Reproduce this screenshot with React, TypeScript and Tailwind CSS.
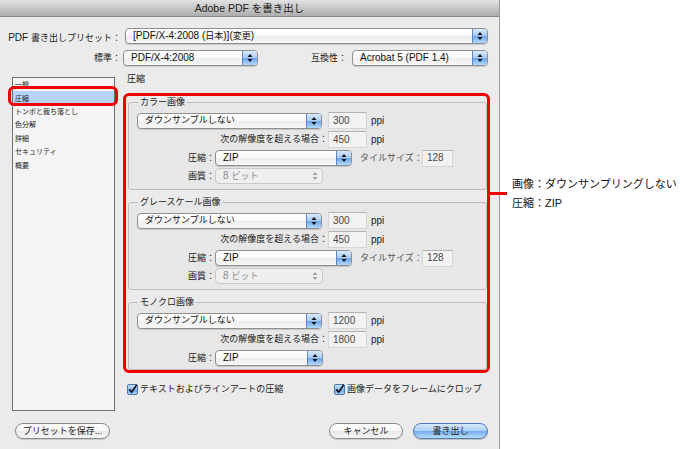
import React from "react";

function Arrows({ disabled }: { disabled?: boolean }) {
  const c = disabled ? "#a0a0a0" : "#111111";
  return (
    <svg width="6" height="10" viewBox="0 0 6 10">
      <path d="M0.5 4 L3 1 L5.5 4 Z" fill={c} />
      <path d="M0.5 6 L3 9 L5.5 6 Z" fill={c} />
    </svg>
  );
}

function Popup({ w, children, disabled }: { w: string; children: React.ReactNode; disabled?: boolean }) {
  return (
    <div
      className={`${w} h-[16px] shrink-0 flex rounded-[4px] border overflow-hidden ${
        disabled
          ? "border-[#c9c9c9] bg-[#efefef]"
          : "border-[#8f8f8f] bg-[linear-gradient(#ffffff,#f8f8f8_50%,#ededed_51%,#f7f7f7)] shadow-[0_1px_1px_rgba(0,0,0,0.15)]"
      }`}
    >
      <div
        className={`flex-1 min-w-0 pl-[7px] flex items-center whitespace-nowrap leading-none ${
          disabled ? "text-[#8c8c8c]" : "text-[#111111]"
        }`}
      >
        {children}
      </div>
      <div
        className={`w-[15px] shrink-0 flex items-center justify-center ${
          disabled ? "" : "border-l border-[#5d86c0] bg-[linear-gradient(#d8eafd,#a6caf4_50%,#6ba5ec_51%,#b3d9fc)]"
        }`}
      >
        <Arrows disabled={disabled} />
      </div>
    </div>
  );
}

function Field({ w, value }: { w: string; value: string }) {
  return (
    <div
      className={`${w} h-[17px] shrink-0 border border-[#d6d6d6] border-t-[#b3b3b3] bg-[#f2f2f2] pl-[4px] flex items-center text-[10px] leading-none text-[#474747]`}
    >
      {value}
    </div>
  );
}

function Check() {
  return (
    <svg width="11" height="11" viewBox="0 0 11 11" className="shrink-0">
      <defs>
        <linearGradient id="cbg" x1="0" y1="0" x2="0" y2="1">
          <stop offset="0" stopColor="#d3e6fc" />
          <stop offset="0.5" stopColor="#8dbcf2" />
          <stop offset="0.51" stopColor="#5e9cea" />
          <stop offset="1" stopColor="#b5dafc" />
        </linearGradient>
      </defs>
      <rect x="0.5" y="0.5" width="10" height="10" rx="1.5" fill="url(#cbg)" stroke="#4b77b3" />
      <path d="M2.3 5.3 L4.6 8.2 L9.8 0.8" fill="none" stroke="#111111" strokeWidth="1.7" />
    </svg>
  );
}

function Group({ title, children, className = "" }: { title: string; children: React.ReactNode; className?: string }) {
  return (
    <fieldset className={`ml-[2px] border border-[#bcbcbc] rounded-[3px] bg-[#e7e7e7] ${className}`}>
      <legend className="ml-[9px] px-[2px] h-[12px] text-[9px] leading-[12px] text-[#222222]">{title}</legend>
      {children}
    </fieldset>
  );
}

function Ppi() {
  return <span className="ml-[4px] text-[10px] leading-none text-[#222222]">ppi</span>;
}

function ImageGroup({
  title,
  res,
  over,
  mono,
  className = "",
}: {
  title: string;
  res: string;
  over: string;
  mono?: boolean;
  className?: string;
}) {
  return (
    <Group title={title} className={className}>
      <div className={`pt-[4px] ${mono ? "pb-[3px]" : "pb-[5px]"} flex flex-col gap-[2px]`}>
        <div className="h-[17px] flex items-center pl-[8px]">
          <Popup w="w-[185px]">
            <span className="text-[9px]">ダウンサンプルしない</span>
          </Popup>
          <div className="ml-[6px]">
            <Field w="w-[39px]" value={res} />
          </div>
          <Ppi />
        </div>
        <div className="h-[17px] flex items-center">
          <div className="w-[199px] text-right text-[9px] leading-none whitespace-nowrap">次の解像度を超える場合：</div>
          <Field w="w-[39px]" value={over} />
          <Ppi />
        </div>
        <div className="h-[16px] flex items-center">
          <div className="w-[86px] text-right text-[9px] leading-none">圧縮：</div>
          <Popup w={mono ? "w-[108px]" : "w-[137px]"}>
            <span className="text-[10px]">ZIP</span>
          </Popup>
          {!mono && (
            <>
              <div className="ml-[8px] w-[62px] text-[9px] leading-none text-[#555555] whitespace-nowrap">タイルサイズ：</div>
              <Field w="w-[31px]" value="128" />
            </>
          )}
        </div>
        {!mono && (
          <div className="h-[16px] flex items-center">
            <div className="w-[86px] text-right text-[9px] leading-none">画質：</div>
            <Popup w="w-[108px]" disabled>
              <span className="text-[10px]">8</span>
              <span className="text-[9px] ml-[3px]">ビット</span>
            </Popup>
          </div>
        )}
      </div>
    </Group>
  );
}

const items = ["一般", "圧縮", "トンボと裁ち落とし", "色分解", "詳細", "セキュリティ", "概要"];

export default function App() {
  return (
    <div className="relative w-[700px] h-[449px] flex bg-white overflow-hidden font-['Liberation_Sans','Noto_Sans_CJK_JP',sans-serif] text-[#1a1a1a]">
      <div className="w-[500px] h-[449px] shrink-0 flex flex-col bg-[#ebebeb] border-r border-[#9b9b9b]">
        {/* title bar */}
        <div className="h-[17px] shrink-0 flex items-center justify-center bg-gradient-to-b from-[#e2e2e2] to-[#adadad] border-b border-[#8a8a8a] text-[10.5px] leading-none text-[#222222]">
          Adobe PDF を書き出し
        </div>

        {/* preset row */}
        <div className="mt-[11px] h-[16px] flex items-center">
          <div className="w-[121px] text-right whitespace-nowrap leading-none">
            <span className="text-[10px]">PDF </span>
            <span className="text-[9px]">書き出しプリセット：</span>
          </div>
          <div className="ml-[4px]">
            <Popup w="w-[363px]">
              <span className="text-[10px]">[PDF/X-4:2008 (</span>
              <span className="text-[9px]">日本</span>
              <span className="text-[10px]">)](</span>
              <span className="text-[9px]">変更</span>
              <span className="text-[10px]">)</span>
            </Popup>
          </div>
        </div>

        {/* standard row */}
        <div className="mt-[6px] h-[16px] flex items-center">
          <div className="w-[121px] text-right text-[9px] leading-none">標準：</div>
          <div className="ml-[2px]">
            <Popup w="w-[135px]">
              <span className="text-[10px]">PDF/X-4:2008</span>
            </Popup>
          </div>
          <div className="w-[89px] text-right text-[9px] leading-none">互換性：</div>
          <div className="ml-[5px]">
            <Popup w="w-[136px]">
              <span className="text-[10px]">Acrobat 5 (PDF 1.4)</span>
            </Popup>
          </div>
        </div>

        {/* main area */}
        <div className="mt-[6px] flex">
          <div className="relative mt-[5px] ml-[12px] w-[103px] h-[334px] shrink-0 border border-[#6e6e6e] bg-[#f4f4f4] flex flex-col">
            {items.map((t, i) => (
              <div
                key={t}
                className={`h-[13.4px] pl-[2px] flex items-center text-[7px] leading-none ${
                  i === 1 ? "bg-[#b6d4f8]" : ""
                }`}
              >
                {t}
              </div>
            ))}
            <div className="absolute -left-[5px] top-[8px] w-[110px] h-[20px] border-[3px] border-[#f00000] rounded-[6px]" />
          </div>

          <div className="ml-[8px] w-[367px] flex flex-col">
            <div className="h-[14px] pl-[4px] flex items-center text-[9px] leading-none">圧縮</div>
            <div className="mt-[7px] h-[280px] border-[3px] border-[#f00000] rounded-[6px] flex flex-col">
              <ImageGroup title="カラー画像" res="300" over="450" />
              <ImageGroup title="グレースケール画像" res="300" over="450" className="mt-[6px]" />
              <ImageGroup title="モノクロ画像" res="1200" over="1800" mono className="mt-[6px]" />
            </div>
            <div className="mt-[10px] h-[12px] pl-[4px] flex items-center text-[9px] leading-none">
              <div className="w-[207px] flex items-center gap-[2px]">
                <Check />
                <span>テキストおよびラインアートの圧縮</span>
              </div>
              <div className="flex items-center gap-[2px]">
                <Check />
                <span>画像データをフレームにクロップ</span>
              </div>
            </div>
          </div>
        </div>

        {/* buttons */}
        <div className="mt-[12px] h-[16px] flex items-center">
          <div className="ml-[15px] w-[95px] h-[16px] rounded-full border border-[#8a8a8a] bg-[linear-gradient(#ffffff,#f6f6f6_50%,#e9e9e9_51%,#f5f5f5)] flex items-center justify-center text-[9px] leading-none shadow-[0_1px_1px_rgba(0,0,0,0.15)]">
            プリセットを保存...
          </div>
          <div className="ml-auto w-[74px] h-[16px] rounded-full border border-[#8a8a8a] bg-[linear-gradient(#ffffff,#f6f6f6_50%,#e9e9e9_51%,#f5f5f5)] flex items-center justify-center text-[9px] leading-none shadow-[0_1px_1px_rgba(0,0,0,0.15)]">
            キャンセル
          </div>
          <div className="ml-[10px] mr-[11px] w-[75px] h-[16px] rounded-full border border-[#4f7cbb] bg-[linear-gradient(#d6e9fd,#a9cdf5_50%,#72abee_51%,#b9ddfc)] flex items-center justify-center text-[9px] leading-none shadow-[0_1px_1px_rgba(0,0,0,0.2)]">
            書き出し
          </div>
        </div>
      </div>

      {/* annotation */}
      <div className="flex-1 pt-[175px] pl-[12px] text-[11px] leading-[19px] text-[#111111] whitespace-nowrap">
        <div>画像：ダウンサンプリングしない</div>
        <div>圧縮：ZIP</div>
      </div>
      <div className="absolute left-[490px] top-[192px] w-[17px] h-[3px] bg-[#f00000]" />
    </div>
  );
}
